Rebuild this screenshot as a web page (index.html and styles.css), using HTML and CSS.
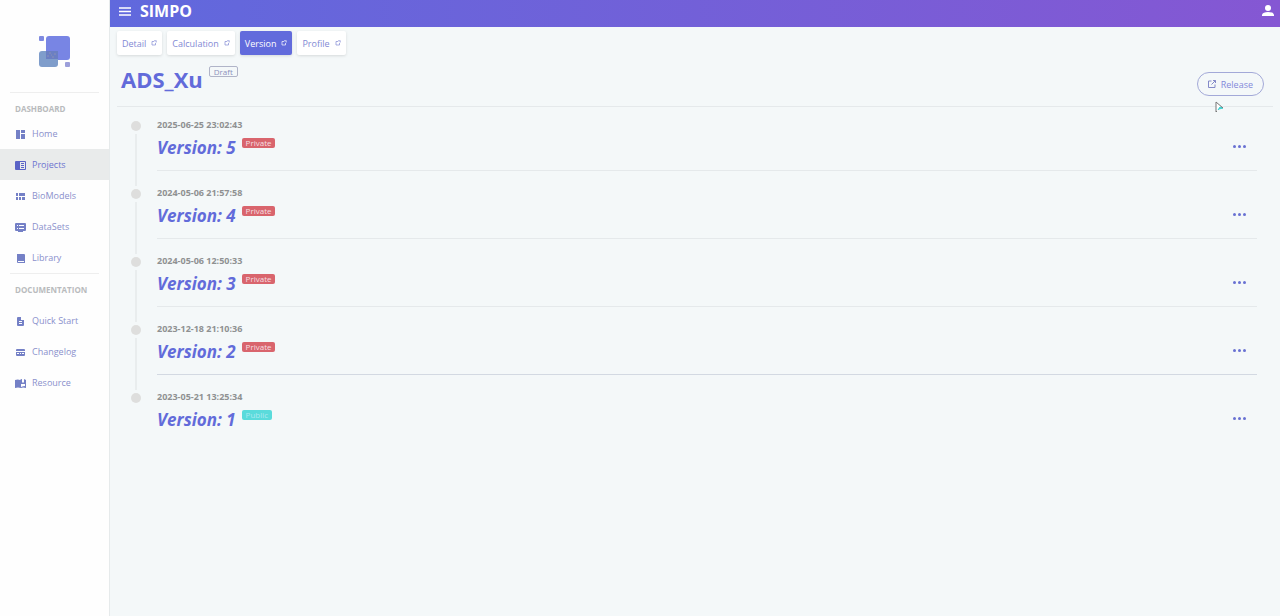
FILE: index.html
```html
<!DOCTYPE html>
<html lang="en">
<head>
    <meta charset="UTF-8">
    <meta name="viewport" content="width=device-width, initial-scale=1.0">
    <title>SIMPO</title>
    <link rel="stylesheet" href="styles.css">
</head>
<body>
    <aside class="sidebar">
        <a class="logo" href="#" aria-label="SIMPO">
            <svg width="31" height="32" viewBox="0 0 31 32">
                <rect x="0" y="0" width="5" height="5" rx="1" fill="#7f8ae0"/>
                <rect x="7" y="0" width="24" height="24" rx="3" fill="#7885e4"/>
                <rect x="0" y="15" width="19" height="16" rx="3" fill="#7f9dcb"/>
                <path d="M7 15h12v8h-12z" fill="#6b7fc3"/>
                <path d="M10 17h2M15 18h2M8 20h2M13 21h2M12 19h1" stroke="#8b91b5" stroke-width="1"/>
                <rect x="26" y="26" width="5" height="5" rx="1" fill="#9c9fda"/>
            </svg>
        </a>
        <nav class="menu">
            <h2 class="menu-title">DASHBOARD</h2>
            <a class="menu-item" href="#">
                <svg class="icon" viewBox="0 0 11 11"><path d="M1 1h4v9H1zM6 1h4v3H6zM6 5h4v5H6z"/></svg>
                <span>Home</span>
            </a>
            <a class="menu-item active" href="#">
                <svg class="icon" viewBox="0 0 11 11"><path fill-rule="evenodd" d="M1 1h9q1 0 1 1v7q0 1-1 1H1q-1 0-1-1V2q0-1 1-1zM5 2v7h5V2zM6 3h3v1H6zM6 5h3v1H6zM6 7h3v1H6z"/></svg>
                <span>Projects</span>
            </a>
            <a class="menu-item" href="#">
                <svg class="icon" viewBox="0 0 11 11"><path d="M1 2h2v3H1zM4 2h6v3H4zM1 6h2v3H1zM4 6h2v3H4zM7 6h3v3H7z"/></svg>
                <span>BioModels</span>
            </a>
            <a class="menu-item" href="#">
                <svg class="icon" viewBox="0 0 11 11"><path fill-rule="evenodd" d="M1 1h9q1 0 1 1v6q0 1-1 1H8v1H3V9H1Q0 9 0 8V2q0-1 1-1zM2 3v1h1V3zM4 3v1h5V3zM2 6v1h1V6zM4 6v1h5V6z"/></svg>
                <span>DataSets</span>
            </a>
            <a class="menu-item" href="#">
                <svg class="icon" viewBox="0 0 11 11"><path fill-rule="evenodd" d="M2 1h7q1 0 1 1v8H3q-1 0-1-1zM3 8v1h6V8z"/></svg>
                <span>Library</span>
            </a>
        </nav>
        <nav class="menu docs">
            <h2 class="menu-title">DOCUMENTATION</h2>
            <a class="menu-item" href="#">
                <svg class="icon" viewBox="0 0 11 11"><path fill-rule="evenodd" d="M3 1h3l3 3v5q0 1-1 1H3q-1 0-1-1V2q0-1 1-1zM6 1v3h3zM4 5v1h3V5zM4 7v1h3V7z"/></svg>
                <span>Quick Start</span>
            </a>
            <a class="menu-item" href="#">
                <svg class="icon" viewBox="0 0 11 11"><path fill-rule="evenodd" d="M2 2h7q1 0 1 1v5q0 1-1 1H2Q1 9 1 8V3q0-1 1-1zM1 4v1h9V4zM2 6v1h2V6zM5 6v1h1V6zM7 6v1h2V6z"/></svg>
                <span>Changelog</span>
            </a>
            <a class="menu-item" href="#">
                <svg class="icon" viewBox="0 0 11 11"><path fill-rule="evenodd" d="M0 2q3-1 5 0 1-1 2-1v4l1-1 1 1V1l2 1v8q-3-1-5 0-3-1-6 0zM6 3v6q2-1 4-1V6H6z"/></svg>
                <span>Resource</span>
            </a>
        </nav>
    </aside>

    <div class="page">
        <header class="topbar">
            <button class="icon-btn" type="button" aria-label="Toggle menu">
                <svg width="12" height="9" viewBox="0 0 12 9"><path d="M0 1h12M0 4.500h12M0 8h12" stroke="#fff" stroke-width="1.400"/></svg>
            </button>
            <a class="brand" href="#">SIMPO</a>
            <button class="icon-btn user" type="button" aria-label="Account">
                <svg width="12" height="12" viewBox="0 0 12 12" fill="#fff"><circle cx="6" cy="3" r="3"/><path d="M0 11V9.500Q1 7 6 7t6 2.500V11z"/></svg>
            </button>
        </header>

        <main class="content">
            <nav class="tabs">
                <a class="tab" href="#">Detail <svg class="tab-icon" viewBox="0 0 6 6"><path d="M3 1.500H1v3.500h3.500V3M3 .8h2.200M5.200.5v2"/></svg></a>
                <a class="tab" href="#">Calculation <svg class="tab-icon" viewBox="0 0 6 6"><path d="M3 1.500H1v3.500h3.500V3M3 .8h2.200M5.200.5v2"/></svg></a>
                <a class="tab active" href="#">Version <svg class="tab-icon" viewBox="0 0 6 6"><path d="M3 1.500H1v3.500h3.500V3M3 .8h2.200M5.200.5v2"/></svg></a>
                <a class="tab" href="#">Profile <svg class="tab-icon" viewBox="0 0 6 6"><path d="M3 1.500H1v3.500h3.500V3M3 .8h2.200M5.200.5v2"/></svg></a>
            </nav>

            <div class="heading">
                <h1>ADS_Xu</h1>
                <span class="tag outline">Draft</span>
                <button class="release" type="button">
                    <svg width="8" height="8" viewBox="0 0 8 8"><path d="M3.500 1H.5v6.500H7V4.500M5 .5h2.500V3M7.500.5 3.500 4.500"/></svg>
                    Release
                </button>
                <svg class="pointer" width="10" height="12" viewBox="0 0 10 12"><path d="M1 1v10l3-3 4-1z" fill="#fff"/><path d="M3 9l2-3 3 1-4 1z" fill="#3fd3d3" stroke="#3fd3d3"/><path d="M2 10 1 11V1l7 6" fill="none" stroke="#777" stroke-width="1"/></svg>
            </div>

            <ol class="timeline">
                <li class="entry">
                    <time>2025-06-25 23:02:43</time>
                    <div class="row">
                        <a class="version" href="#">Version: 5</a>
                        <span class="tag private">Private</span>
                        <button class="more" type="button" aria-label="More"><i></i><i></i><i></i></button>
                    </div>
                </li>
                <li class="entry">
                    <time>2024-05-06 21:57:58</time>
                    <div class="row">
                        <a class="version" href="#">Version: 4</a>
                        <span class="tag private">Private</span>
                        <button class="more" type="button" aria-label="More"><i></i><i></i><i></i></button>
                    </div>
                </li>
                <li class="entry">
                    <time>2024-05-06 12:50:33</time>
                    <div class="row">
                        <a class="version" href="#">Version: 3</a>
                        <span class="tag private">Private</span>
                        <button class="more" type="button" aria-label="More"><i></i><i></i><i></i></button>
                    </div>
                </li>
                <li class="entry strong">
                    <time>2023-12-18 21:10:36</time>
                    <div class="row">
                        <a class="version" href="#">Version: 2</a>
                        <span class="tag private">Private</span>
                        <button class="more" type="button" aria-label="More"><i></i><i></i><i></i></button>
                    </div>
                </li>
                <li class="entry">
                    <time>2023-05-21 13:25:34</time>
                    <div class="row">
                        <a class="version" href="#">Version: 1</a>
                        <span class="tag public">Public</span>
                        <button class="more" type="button" aria-label="More"><i></i><i></i><i></i></button>
                    </div>
                </li>
            </ol>
        </main>
    </div>
</body>
</html>
```

FILE: styles.css
```css
*{
    box-sizing: border-box;
    padding: 0;
    margin: 0;
}
body{
    display: flex;
    min-height: 100vh;
    background-color: #f4f8f9;
    color: #626bda;
    font-family: "Open Sans", "Noto Sans", sans-serif;
    font-size: 9px;
}
a{
    color: inherit;
    text-decoration: none;
}
button{
    border: 0;
    background: none;
    color: inherit;
    font: inherit;
    cursor: pointer;
}
ol{
    list-style: none;
}

/* sidebar */
.sidebar{
    flex: none;
    width: 110px;
    background-color: #fefefe;
    border-right: 1px solid #e6eaeb;
}
.logo{
    display: flex;
    justify-content: center;
    padding: 36px 0 24px;
}
.menu{
    position: relative;
    padding-top: 10px;
}
.menu::before{
    content: "";
    position: absolute;
    top: 0;
    left: 10px;
    right: 10px;
    border-top: 1px solid #eee;
}
.menu-title{
    padding-left: 15px;
    font-size: 8px;
    line-height: 14px;
    color: #b9bbbd;
    margin-bottom: 2px;
}
.docs .menu-title{
    margin-bottom: 8px;
}
.menu-item{
    display: flex;
    align-items: center;
    gap: 6px;
    height: 31px;
    padding-left: 15px;
    color: #8a90cc;
}
.menu-item.active{
    background-color: #e9ebeb;
    color: #6d74d0;
}
.icon{
    width: 11px;
    height: 11px;
    margin-top: 2px;
    fill: #7480c6;
}
.active .icon{
    fill: #5a63c6;
}

/* top bar */
.page{
    flex: 1;
    min-width: 0;
}
.topbar{
    display: flex;
    align-items: center;
    height: 27px;
    padding: 0 6px 5px 9px;
    background: linear-gradient(90deg, #6069dd, #8557d3);
    color: #fff;
}
.icon-btn{
    display: flex;
}
.brand{
    margin-left: 9px;
    font-size: 16px;
    font-weight: bold;
}
.user{
    margin-left: auto;
}

/* tabs */
.content{
    padding: 4px 7px;
}
.tabs{
    display: flex;
    gap: 5px;
}
.tab{
    display: flex;
    align-items: center;
    gap: 5px;
    height: 24px;
    padding: 0 5px;
    border-radius: 2px;
    background-color: #fff;
    color: #8289d4;
    box-shadow: 0 1px 3px rgba(0, 0, 0, .12);
}
.tab.active{
    background-color: #626bdc;
    color: #fff;
}
.tab-icon{
    width: 6px;
    height: 6px;
    fill: none;
    stroke: currentColor;
    stroke-width: .7;
}

/* heading */
.heading{
    position: relative;
    display: flex;
    align-items: flex-start;
    height: 52px;
    padding: 8px 9px 0 4px;
    border-bottom: 1px solid #e5e9eb;
}
h1{
    font-size: 22px;
    line-height: 32px;
}
.tag{
    margin-left: 6px;
    padding: 0 4px;
    border-radius: 2px;
    font-size: 8px;
    line-height: 10px;
}
.outline{
    margin-top: 3px;
    border: 1px solid #b0b4c8;
    line-height: 9px;
    color: #8d92bd;
}
.release{
    display: flex;
    align-items: center;
    gap: 5px;
    height: 24px;
    margin: 9px 0 0 auto;
    padding: 0 10px;
    border: 1px solid #a3a9d8;
    border-radius: 12px;
    color: #8389da;
}
.release svg{
    fill: none;
    stroke: #8389c8;
}
.pointer{
    position: absolute;
    right: 48px;
    bottom: -7px;
}

/* timeline */
.timeline{
    padding: 11px 16px 0 40px;
}
.entry{
    position: relative;
    height: 53px;
    margin-bottom: 15px;
    border-bottom: 1px solid #e5e9eb;
}
.strong{
    border-color: #d3d9e2;
}
.entry:last-child{
    border: 0;
}
.entry::before{
    content: "";
    position: absolute;
    left: -26px;
    top: 3px;
    width: 10px;
    height: 10px;
    border-radius: 50%;
    background-color: #dededd;
}
.entry::after{
    content: "";
    position: absolute;
    left: -22px;
    top: 16px;
    width: 2px;
    height: 52px;
    background-color: #e9edee;
}
.entry:last-child::after{
    display: none;
}
time{
    display: block;
    font-size: 9px;
    font-weight: bold;
    line-height: 14px;
    color: #8f9192;
}
.row{
    display: flex;
    align-items: flex-start;
    padding: 4px 11px 0 0;
}
.version{
    font-size: 17px;
    font-weight: bold;
    font-style: italic;
    line-height: 24px;
}
.private{
    margin-top: 2px;
    background-color: #d9656d;
    color: #f5dfe1;
}
.public{
    margin-top: 2px;
    background-color: #5adbdb;
    color: #a9e9f0;
}
.more{
    display: flex;
    gap: 2px;
    margin: 8px 0 0 auto;
    padding: 1px 0;
}
.more i{
    width: 3px;
    height: 3px;
    border-radius: 50%;
    background-color: #6871d2;
}
```
